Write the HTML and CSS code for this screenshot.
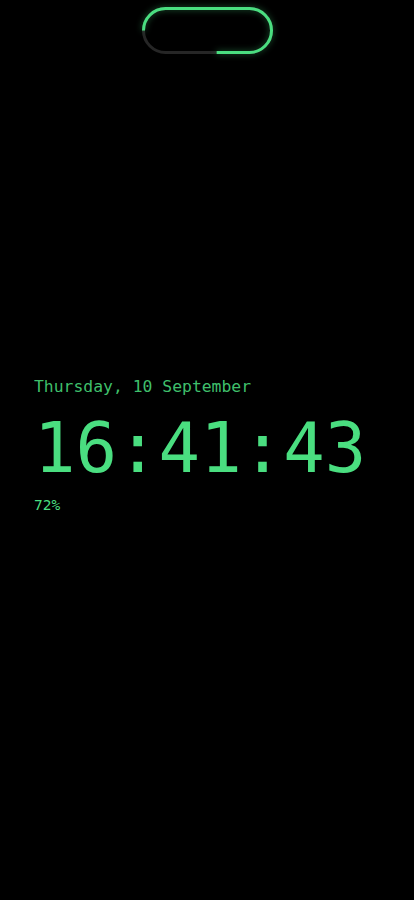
FILE: index.html
```html
<!DOCTYPE html>
<html lang="en">
<head>
<meta charset="utf-8">
<meta name="viewport" content="width=device-width, initial-scale=1">
<title>Clock</title>
<link rel="stylesheet" href="styles.css">
</head>
<body>
<div class="screen">
  <div class="island">
    <svg class="island-svg" width="136" height="52" viewBox="138 4 136 52" xmlns="http://www.w3.org/2000/svg">
      <path class="track" d="M142.5 30.5 A22 22 0 0 1 164.5 8.5 H248.5 A22 22 0 0 1 248.5 52.5 H164.5 A22 22 0 0 1 142.5 30.5 Z"/>
      <path class="progress" pathLength="100" d="M142.5 30.5 A22 22 0 0 1 164.5 8.5 H248.5 A22 22 0 0 1 248.5 52.5 H164.5 A22 22 0 0 1 142.5 30.5 Z"/>
    </svg>
  </div>
  <main class="clock">
    <div class="date">Thursday, 10 September</div>
    <div class="time">16:41:43</div>
    <div class="battery">72%</div>
  </main>
</div>
</body>
</html>
```
FILE: styles.css
```css
html, body {
  margin: 0;
  padding: 0;
  background: #000;
}
body {
  font-family: "DejaVu Sans Mono", "Liberation Mono", monospace;
  color: #4ade80;
}
.screen {
  width: 414px;
  height: 900px;
  overflow: hidden;
  background: #000;
}
.island {
  display: flex;
  justify-content: center;
  padding-top: 4px;
  height: 52px;
}
.island-svg {
  display: block;
  overflow: visible;
}
.track {
  fill: none;
  stroke: #262626;
  stroke-width: 3;
}
.progress {
  fill: none;
  stroke: #4ade80;
  stroke-width: 3;
  stroke-dasharray: 72 100;
  stroke-linecap: butt;
  filter: drop-shadow(0 0 3px rgba(74, 222, 128, 0.45));
}
.clock {
  padding-top: 321px;
  padding-left: 34px;
  display: flex;
  flex-direction: column;
}
.date {
  font-size: 16.4px;
  line-height: 20px;
  color: #3fbf6b;
}
.time {
  margin-top: 15px;
  font-size: 69px;
  line-height: 72px;
  color: #4ade80;
}
.battery {
  margin-top: 12px;
  font-size: 14.5px;
  line-height: 18px;
  color: #4ade80;
}
```
